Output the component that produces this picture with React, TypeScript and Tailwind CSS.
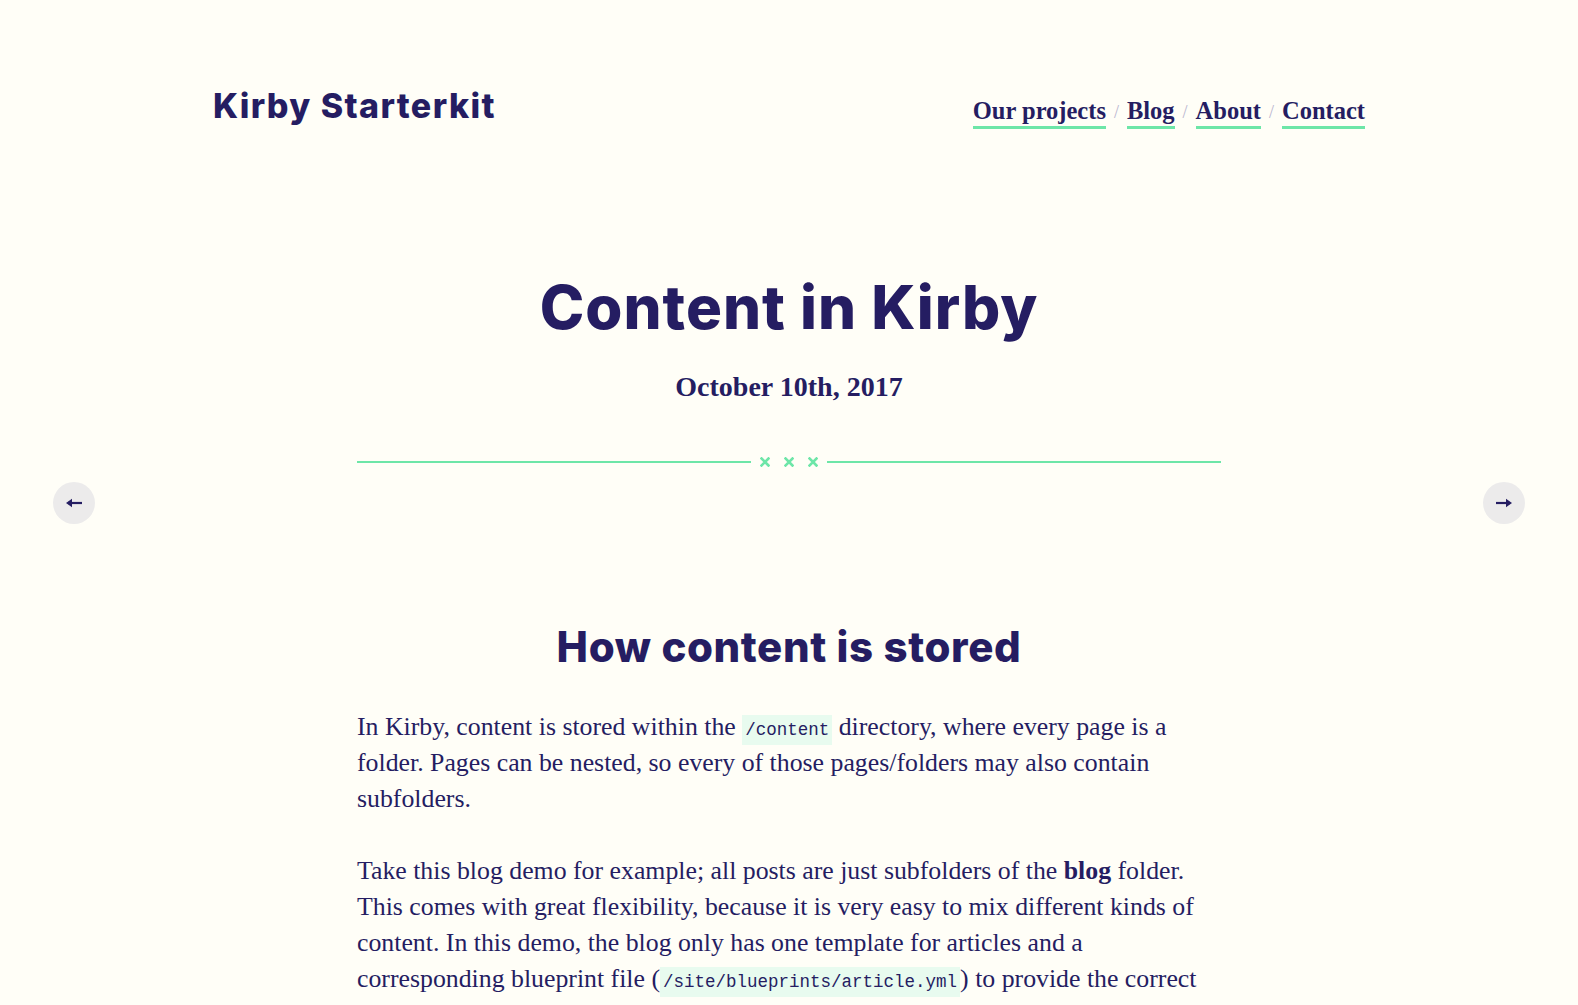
import React from "react";

const heading = { fontFamily: "Inter, 'Open Sans', sans-serif" };
const serif = { fontFamily: "'Liberation Serif', 'DejaVu Serif', serif" };
const mono = { fontFamily: "'Liberation Mono', 'DejaVu Sans Mono', monospace" };

function Code({ children }: { children: React.ReactNode }) {
  return (
    <code style={mono} className="bg-[#e8fbef] px-[3px] py-[5px] text-[17.5px] leading-none">
      {children}
    </code>
  );
}

function X() {
  return (
    <svg width="10" height="10" viewBox="0 0 10 10" className="block">
      <path d="M1.5 1.5 L8.5 8.5 M8.5 1.5 L1.5 8.5" stroke="#6de6a8" strokeWidth="2.6" strokeLinecap="square" />
    </svg>
  );
}

function ArrowBtn({ dir }: { dir: "left" | "right" }) {
  return (
    <a
      href="#"
      className={`fixed top-1/2 -translate-y-1/2 ${dir === "left" ? "left-[53px]" : "right-[53px]"} flex h-[42px] w-[42px] items-center justify-center rounded-full bg-[#ecebeb] text-[#251d62]`}
    >
      <svg width="18" height="12" viewBox="0 0 18 12">
        {dir === "left" ? (
          <>
            <path d="M3 6 H17" stroke="#251d62" strokeWidth="2.2" />
            <path d="M1 6 L7 1.8 L7 10.2 Z" fill="#251d62" />
          </>
        ) : (
          <>
            <path d="M1 6 H15" stroke="#251d62" strokeWidth="2.2" />
            <path d="M17 6 L11 1.8 L11 10.2 Z" fill="#251d62" />
          </>
        )}
      </svg>
    </a>
  );
}

function Line({ children }: { children: React.ReactNode }) {
  return <span className="block h-[36px] whitespace-nowrap">{children}</span>;
}

export default function App() {
  const links = ["Our projects", "Blog", "About", "Contact"];
  return (
    <div className="min-h-[1005px] bg-[#fffef7] text-[#251d62]">
      <ArrowBtn dir="left" />
      <ArrowBtn dir="right" />
      <header className="mx-auto flex w-[1152px] items-start justify-between pt-[84px]">
        <a href="#" style={heading} className="text-[34px] font-extrabold leading-[44px] tracking-[1.4px]">
          Kirby Starterkit
        </a>
        <nav style={serif} className="mt-[11px] flex items-center text-[24.5px] font-bold leading-[34px]">
          {links.map((l, i) => (
            <React.Fragment key={l}>
              {i > 0 && <span className="mx-[8px] text-[18px] font-normal text-[#b9b5cf]">/</span>}
              <a href="#" className="border-b-[3px] border-[#6de6a8] leading-[30px]">
                {l}
              </a>
            </React.Fragment>
          ))}
        </nav>
      </header>

      <main className="mx-auto w-[864px]">
        <div className="pt-[142px] text-center">
          <h1 style={heading} className="text-[60px] font-extrabold leading-[72px] tracking-[1px]">
            Content in Kirby
          </h1>
          <p style={serif} className="mt-[27px] text-[28px] font-bold leading-[34px]">
            October 10th, 2017
          </p>
        </div>

        <div className="mt-[53px] flex items-center">
          <div className="h-[2px] flex-1 bg-[#6de6a8]" />
          <div className="mx-[9px] flex gap-[14px]">
            <X />
            <X />
            <X />
          </div>
          <div className="h-[2px] flex-1 bg-[#6de6a8]" />
        </div>

        <h2 style={heading} className="mt-[154px] text-center text-[42px] font-extrabold leading-[52px] tracking-[0.6px]">
          How content is stored
        </h2>

        <div style={serif} className="mt-[36px] text-[25.8px] leading-[36px]">
          <p>
            <Line>
              In Kirby, content is stored within the <Code>/content</Code> directory, where every page is a
            </Line>
            <Line>folder. Pages can be nested, so every of those pages/folders may also contain</Line>
            <Line>subfolders.</Line>
          </p>
          <p className="mt-[36px]">
            <Line>
              Take this blog demo for example; all posts are just subfolders of the <strong>blog</strong> folder.
            </Line>
            <Line>This comes with great flexibility, because it is very easy to mix different kinds of</Line>
            <Line>content. In this demo, the blog only has one template for articles and a</Line>
            <Line>
              corresponding blueprint file (<Code>/site/blueprints/article.yml</Code>) to provide the correct
            </Line>
            <Line>form fields in the Panel.</Line>
          </p>
        </div>
      </main>
    </div>
  );
}
